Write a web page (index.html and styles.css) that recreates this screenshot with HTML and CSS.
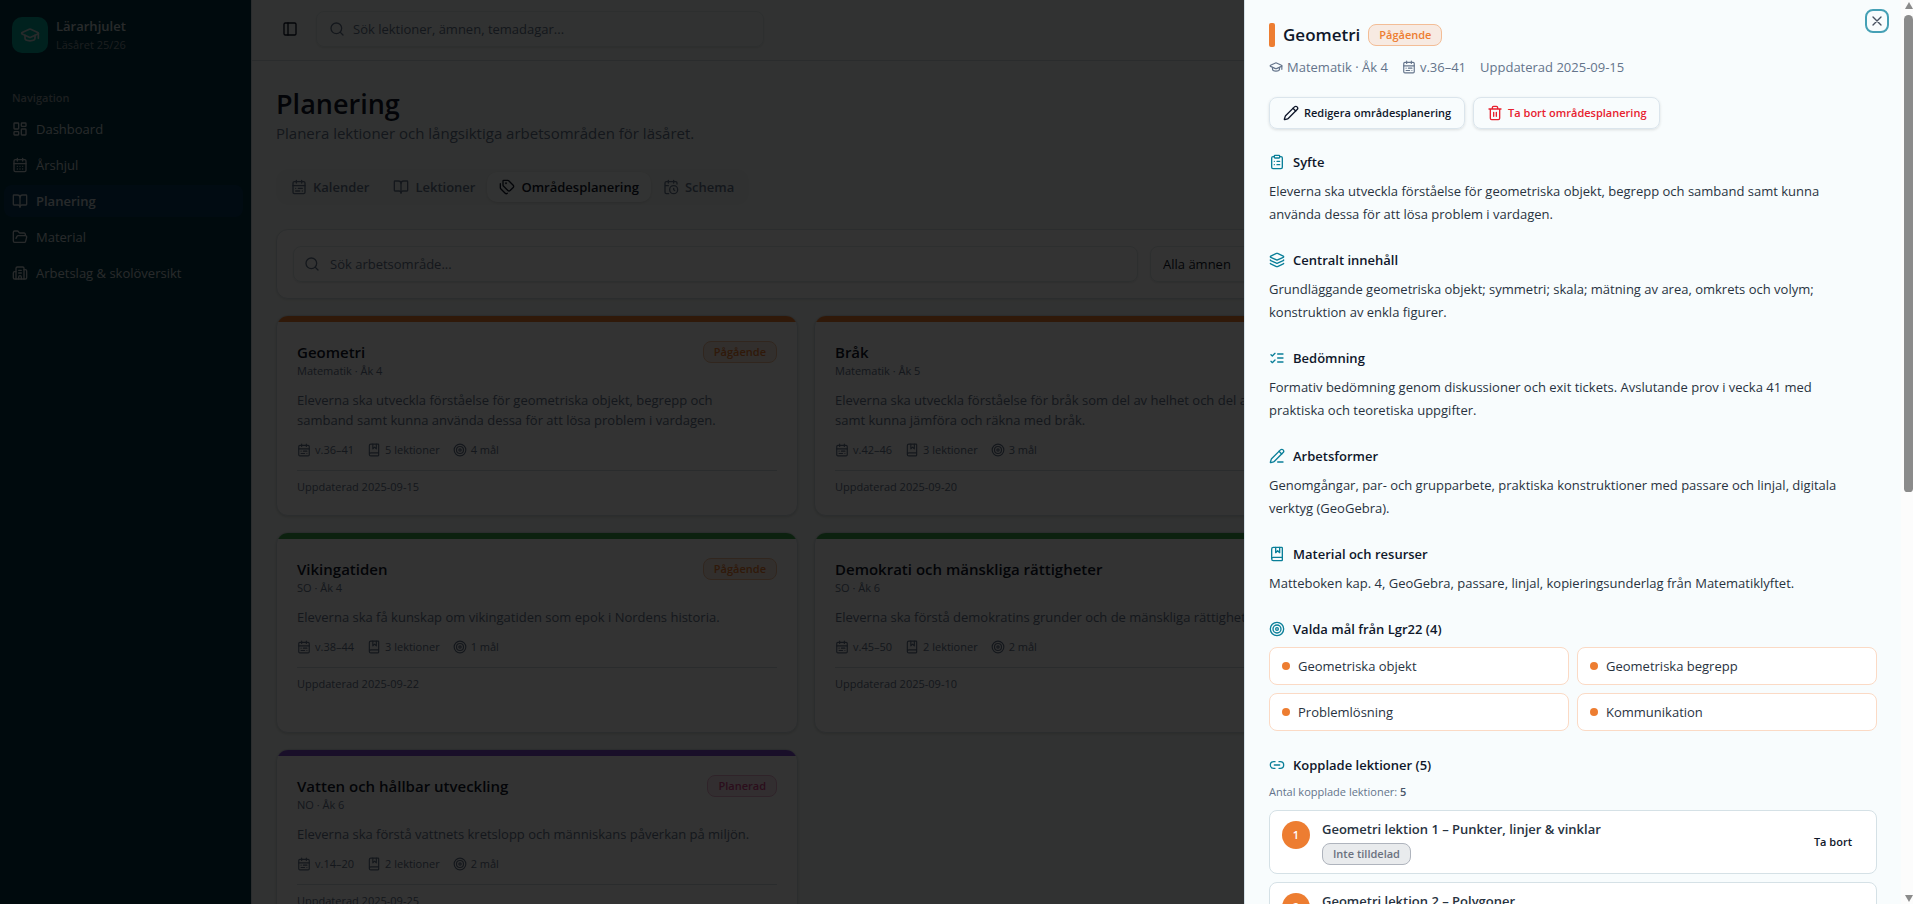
FILE: index.html
```
<!DOCTYPE html>
<html lang="sv">
<head>
  <meta charset="UTF-8">
  <meta name="viewport" content="width=device-width, initial-scale=1">
  <title>Lärarhjulet – Planering</title>
  <link rel="stylesheet" href="styles.css">
</head>
<body>

  <!-- Ikoner -->
  <svg class="sprite" aria-hidden="true">
    <symbol id="i-cap" viewBox="0 0 24 24"><path d="M21.42 10.922a1 1 0 0 0-.019-1.838L12.83 5.18a2 2 0 0 0-1.66 0L2.6 9.08a1 1 0 0 0 0 1.832l8.57 3.908a2 2 0 0 0 1.66 0z"/><path d="M22 10v6"/><path d="M6 12.5V16a6 3 0 0 0 12 0v-3.5"/></symbol>
    <symbol id="i-dashboard" viewBox="0 0 24 24"><rect width="7" height="9" x="3" y="3" rx="1"/><rect width="7" height="5" x="14" y="3" rx="1"/><rect width="7" height="9" x="14" y="12" rx="1"/><rect width="7" height="5" x="3" y="16" rx="1"/></symbol>
    <symbol id="i-days" viewBox="0 0 24 24"><path d="M8 2v4M16 2v4M3 10h18"/><rect width="18" height="18" x="3" y="4" rx="2"/><path d="M8 14h.01M12 14h.01M16 14h.01M8 18h.01M12 18h.01M16 18h.01"/></symbol>
    <symbol id="i-range" viewBox="0 0 24 24"><rect width="18" height="18" x="3" y="4" rx="2"/><path d="M16 2v4M3 10h18M8 2v4M17 14h-6M13 18H7M7 14h.01M17 18h.01"/></symbol>
    <symbol id="i-book" viewBox="0 0 24 24"><path d="M12 7v14"/><path d="M3 18a1 1 0 0 1-1-1V4a1 1 0 0 1 1-1h5a4 4 0 0 1 4 4 4 4 0 0 1 4-4h5a1 1 0 0 1 1 1v13a1 1 0 0 1-1 1h-6a3 3 0 0 0-3 3 3 3 0 0 0-3-3z"/></symbol>
    <symbol id="i-folder" viewBox="0 0 24 24"><path d="m6 14 1.5-2.9A2 2 0 0 1 9.24 10H20a2 2 0 0 1 1.94 2.5l-1.54 6a2 2 0 0 1-1.95 1.5H4a2 2 0 0 1-2-2V5a2 2 0 0 1 2-2h3.9a2 2 0 0 1 1.69.9l.81 1.2a2 2 0 0 0 1.67.9H18a2 2 0 0 1 2 2v2"/></symbol>
    <symbol id="i-building" viewBox="0 0 24 24"><path d="M10 12h4M10 8h4M14 21v-3a2 2 0 0 0-4 0v3"/><path d="M6 10H4a2 2 0 0 0-2 2v7a2 2 0 0 0 2 2h16a2 2 0 0 0 2-2V9a2 2 0 0 0-2-2h-2"/><path d="M6 21V5a2 2 0 0 1 2-2h8a2 2 0 0 1 2 2v16"/></symbol>
    <symbol id="i-panel" viewBox="0 0 24 24"><rect width="18" height="18" x="3" y="3" rx="2"/><path d="M9 3v18"/></symbol>
    <symbol id="i-search" viewBox="0 0 24 24"><circle cx="11" cy="11" r="8"/><path d="m21 21-4.34-4.34"/></symbol>
    <symbol id="i-tags" viewBox="0 0 24 24"><path d="M13.172 2a2 2 0 0 1 1.414.586l6.71 6.71a2.4 2.4 0 0 1 0 3.408l-4.592 4.592a2.4 2.4 0 0 1-3.408 0l-6.71-6.71A2 2 0 0 1 6 9.172V3a1 1 0 0 1 1-1z"/><path d="M2 7v6.172a2 2 0 0 0 .586 1.414l6.71 6.71a2.4 2.4 0 0 0 3.191.193"/><circle cx="10.5" cy="6.5" r=".5" fill="currentColor"/></symbol>
    <symbol id="i-clock" viewBox="0 0 24 24"><path d="M16 14v2.2l1.6 1M16 2v4M21 7.5V6a2 2 0 0 0-2-2H5a2 2 0 0 0-2 2v14a2 2 0 0 0 2 2h3.5M3 10h5M8 2v4"/><circle cx="16" cy="16" r="6"/></symbol>
    <symbol id="i-marked" viewBox="0 0 24 24"><path d="M10 2v8l3-3 3 3V2"/><path d="M4 19.5v-15A2.5 2.5 0 0 1 6.5 2H19a1 1 0 0 1 1 1v18a1 1 0 0 1-1 1H6.5a1 1 0 0 1 0-5H20"/></symbol>
    <symbol id="i-target" viewBox="0 0 24 24"><circle cx="12" cy="12" r="10"/><circle cx="12" cy="12" r="6"/><circle cx="12" cy="12" r="2"/></symbol>
    <symbol id="i-pencil" viewBox="0 0 24 24"><path d="M21.174 6.812a1 1 0 0 0-3.986-3.987L3.842 16.174a2 2 0 0 0-.5.83l-1.321 4.352a.5.5 0 0 0 .623.622l4.353-1.32a2 2 0 0 0 .83-.497z"/><path d="m15 5 4 4"/></symbol>
    <symbol id="i-pencil-line" viewBox="0 0 24 24"><path d="M13 21h8"/><path d="m15 5 4 4"/><path d="M21.174 6.812a1 1 0 0 0-3.986-3.987L3.842 16.174a2 2 0 0 0-.5.83l-1.321 4.352a.5.5 0 0 0 .623.622l4.353-1.32a2 2 0 0 0 .83-.497z"/></symbol>
    <symbol id="i-trash" viewBox="0 0 24 24"><path d="M10 11v6M14 11v6M19 6v14a2 2 0 0 1-2 2H7a2 2 0 0 1-2-2V6M3 6h18M8 6V4a2 2 0 0 1 2-2h4a2 2 0 0 1 2 2v2"/></symbol>
    <symbol id="i-clipboard" viewBox="0 0 24 24"><rect width="8" height="4" x="8" y="2" rx="1"/><path d="M16 4h2a2 2 0 0 1 2 2v14a2 2 0 0 1-2 2H6a2 2 0 0 1-2-2V6a2 2 0 0 1 2-2h2M12 11h4M12 16h4M8 11h.01M8 16h.01"/></symbol>
    <symbol id="i-layers" viewBox="0 0 24 24"><path d="M12.83 2.18a2 2 0 0 0-1.66 0L2.6 6.08a1 1 0 0 0 0 1.83l8.58 3.91a2 2 0 0 0 1.66 0l8.58-3.9a1 1 0 0 0 0-1.83z"/><path d="M2 12a1 1 0 0 0 .58.91l8.6 3.91a2 2 0 0 0 1.65 0l8.58-3.9A1 1 0 0 0 22 12"/><path d="M2 17a1 1 0 0 0 .58.91l8.6 3.91a2 2 0 0 0 1.65 0l8.58-3.9A1 1 0 0 0 22 17"/></symbol>
    <symbol id="i-checks" viewBox="0 0 24 24"><path d="m3 17 2 2 4-4M3 7l2 2 4-4M13 6h8M13 12h8M13 18h8"/></symbol>
    <symbol id="i-link" viewBox="0 0 24 24"><path d="M9 17H7A5 5 0 0 1 7 7h2M15 7h2a5 5 0 1 1 0 10h-2M8 12h8"/></symbol>
    <symbol id="i-x" viewBox="0 0 24 24"><path d="M18 6 6 18M6 6l12 12"/></symbol>
  </svg>

  <div class="app">
    <aside class="sidebar">
      <div class="brand">
        <div class="brand-logo"><svg class="icon"><use href="#i-cap"/></svg></div>
        <div>
          <div class="brand-name">Lärarhjulet</div>
          <div class="brand-year">Läsåret 25/26</div>
        </div>
      </div>
      <nav class="nav">
        <div class="nav-label">Navigation</div>
        <a class="nav-item" href="#"><svg class="icon"><use href="#i-dashboard"/></svg>Dashboard</a>
        <a class="nav-item" href="#"><svg class="icon"><use href="#i-days"/></svg>Årshjul</a>
        <a class="nav-item active" href="#"><svg class="icon"><use href="#i-book"/></svg>Planering</a>
        <a class="nav-item" href="#"><svg class="icon"><use href="#i-folder"/></svg>Material</a>
        <a class="nav-item" href="#"><svg class="icon"><use href="#i-building"/></svg>Arbetslag &amp; skolöversikt</a>
      </nav>
    </aside>

    <div class="page">
      <header class="topbar">
        <button class="toggle" aria-label="Visa sidofält"><svg class="icon"><use href="#i-panel"/></svg></button>
        <label class="search top-search">
          <svg class="icon"><use href="#i-search"/></svg>
          <input type="text" aria-label="Sök" placeholder="Sök lektioner, ämnen, temadagar...">
        </label>
      </header>

      <main class="main">
        <h1 class="title">Planering</h1>
        <p class="subtitle">Planera lektioner och långsiktiga arbetsområden för läsåret.</p>

        <div class="tabs">
          <button class="tab"><svg class="icon"><use href="#i-range"/></svg>Kalender</button>
          <button class="tab"><svg class="icon"><use href="#i-book"/></svg>Lektioner</button>
          <button class="tab active"><svg class="icon"><use href="#i-tags"/></svg>Områdesplanering</button>
          <button class="tab"><svg class="icon"><use href="#i-clock"/></svg>Schema</button>
        </div>

        <div class="filters">
          <label class="search area-search">
            <svg class="icon"><use href="#i-search"/></svg>
            <input type="text" aria-label="Sök arbetsområde" placeholder="Sök arbetsområde...">
          </label>
          <select class="select" aria-label="Ämne"><option>Alla ämnen</option></select>
        </div>

        <div class="grid">
          <article class="card orange">
            <div class="card-head"><h2>Geometri</h2><span class="badge ongoing">Pågående</span></div>
            <p class="card-sub">Matematik · Åk 4</p>
            <p class="card-desc">Eleverna ska utveckla förståelse för geometriska objekt, begrepp och samband samt kunna använda dessa för att lösa problem i vardagen.</p>
            <div class="card-meta">
              <span><svg class="icon"><use href="#i-range"/></svg>v.36–41</span>
              <span><svg class="icon"><use href="#i-marked"/></svg>5 lektioner</span>
              <span><svg class="icon"><use href="#i-target"/></svg>4 mål</span>
            </div>
            <div class="card-foot">Uppdaterad 2025-09-15</div>
          </article>

          <article class="card orange">
            <div class="card-head"><h2>Bråk</h2></div>
            <p class="card-sub">Matematik · Åk 5</p>
            <p class="card-desc">Eleverna ska utveckla förståelse för bråk som del av helhet och del av antal samt kunna jämföra och räkna med bråk.</p>
            <div class="card-meta">
              <span><svg class="icon"><use href="#i-range"/></svg>v.42–46</span>
              <span><svg class="icon"><use href="#i-marked"/></svg>3 lektioner</span>
              <span><svg class="icon"><use href="#i-target"/></svg>3 mål</span>
            </div>
            <div class="card-foot">Uppdaterad 2025-09-20</div>
          </article>

          <article class="card green row-start">
            <div class="card-head"><h2>Vikingatiden</h2><span class="badge ongoing">Pågående</span></div>
            <p class="card-sub">SO · Åk 4</p>
            <p class="card-desc">Eleverna ska få kunskap om vikingatiden som epok i Nordens historia.</p>
            <div class="card-meta">
              <span><svg class="icon"><use href="#i-range"/></svg>v.38–44</span>
              <span><svg class="icon"><use href="#i-marked"/></svg>3 lektioner</span>
              <span><svg class="icon"><use href="#i-target"/></svg>1 mål</span>
            </div>
            <div class="card-foot">Uppdaterad 2025-09-22</div>
          </article>

          <article class="card green">
            <div class="card-head"><h2>Demokrati och mänskliga rättigheter</h2></div>
            <p class="card-sub">SO · Åk 6</p>
            <p class="card-desc">Eleverna ska förstå demokratins grunder och de mänskliga rättigheterna.</p>
            <div class="card-meta">
              <span><svg class="icon"><use href="#i-range"/></svg>v.45–50</span>
              <span><svg class="icon"><use href="#i-marked"/></svg>2 lektioner</span>
              <span><svg class="icon"><use href="#i-target"/></svg>2 mål</span>
            </div>
            <div class="card-foot">Uppdaterad 2025-09-10</div>
          </article>

          <article class="card purple row-start">
            <div class="card-head"><h2>Vatten och hållbar utveckling</h2><span class="badge planned">Planerad</span></div>
            <p class="card-sub">NO · Åk 6</p>
            <p class="card-desc">Eleverna ska förstå vattnets kretslopp och människans påverkan på miljön.</p>
            <div class="card-meta">
              <span><svg class="icon"><use href="#i-range"/></svg>v.14–20</span>
              <span><svg class="icon"><use href="#i-marked"/></svg>2 lektioner</span>
              <span><svg class="icon"><use href="#i-target"/></svg>2 mål</span>
            </div>
            <div class="card-foot">Uppdaterad 2025-09-25</div>
          </article>
        </div>
      </main>
    </div>
  </div>

  <div class="overlay"></div>

  <!-- Detaljpanel -->
  <div class="sheet" role="dialog" aria-labelledby="sheetTitle">
    <div class="sheet-body">
      <div class="sheet-head">
        <span class="sheet-mark"></span>
        <h2 id="sheetTitle">Geometri</h2>
        <span class="badge ongoing">Pågående</span>
      </div>
      <div class="sheet-meta">
        <span><svg class="icon"><use href="#i-cap"/></svg>Matematik · Åk 4</span>
        <span><svg class="icon"><use href="#i-range"/></svg>v.36–41</span>
        <span>Uppdaterad 2025-09-15</span>
      </div>
      <div class="actions">
        <button class="btn"><svg class="icon"><use href="#i-pencil"/></svg>Redigera områdesplanering</button>
        <button class="btn danger"><svg class="icon"><use href="#i-trash"/></svg>Ta bort områdesplanering</button>
      </div>

      <div class="sections">
        <section>
          <h3><svg class="icon"><use href="#i-clipboard"/></svg>Syfte</h3>
          <p>Eleverna ska utveckla förståelse för geometriska objekt, begrepp och samband samt kunna använda dessa för att lösa problem i vardagen.</p>
        </section>
        <section>
          <h3><svg class="icon"><use href="#i-layers"/></svg>Centralt innehåll</h3>
          <p>Grundläggande geometriska objekt; symmetri; skala; mätning av area, omkrets och volym; konstruktion av enkla figurer.</p>
        </section>
        <section>
          <h3><svg class="icon"><use href="#i-checks"/></svg>Bedömning</h3>
          <p>Formativ bedömning genom diskussioner och exit tickets. Avslutande prov i vecka 41 med praktiska och teoretiska uppgifter.</p>
        </section>
        <section>
          <h3><svg class="icon"><use href="#i-pencil-line"/></svg>Arbetsformer</h3>
          <p>Genomgångar, par- och grupparbete, praktiska konstruktioner med passare och linjal, digitala verktyg (GeoGebra).</p>
        </section>
        <section>
          <h3><svg class="icon"><use href="#i-marked"/></svg>Material och resurser</h3>
          <p>Matteboken kap. 4, GeoGebra, passare, linjal, kopieringsunderlag från Matematiklyftet.</p>
        </section>
        <section>
          <h3><svg class="icon"><use href="#i-target"/></svg>Valda mål från Lgr22 (4)</h3>
          <ul class="goals">
            <li>Geometriska objekt</li>
            <li>Geometriska begrepp</li>
            <li>Problemlösning</li>
            <li>Kommunikation</li>
          </ul>
        </section>
        <section>
          <h3><svg class="icon"><use href="#i-link"/></svg>Kopplade lektioner (5)</h3>
          <div class="count">Antal kopplade lektioner: <b>5</b></div>
          <div class="lesson">
            <span class="num">1</span>
            <div class="lesson-info">
              <div class="lesson-title">Geometri lektion 1 – Punkter, linjer &amp; vinklar</div>
              <span class="badge unassigned">Inte tilldelad</span>
            </div>
            <button class="remove">Ta bort</button>
          </div>
          <div class="lesson">
            <span class="num">2</span>
            <div class="lesson-info">
              <div class="lesson-title">Geometri lektion 2 – Polygoner</div>
              <span class="badge unassigned">Inte tilldelad</span>
            </div>
            <button class="remove">Ta bort</button>
          </div>
        </section>
      </div>
    </div>

    <div class="scrollbar">
      <span class="arrow up"></span>
      <span class="thumb"></span>
      <span class="arrow down"></span>
    </div>

    <button class="close" aria-label="Stäng"><svg class="icon"><use href="#i-x"/></svg></button>
  </div>

</body>
</html>
```
FILE: styles.css
```
* {
  margin: 0;
  padding: 0;
  box-sizing: border-box;
}

body {
  font-family: "Segoe UI", "Open Sans", "Noto Sans", sans-serif;
  font-size: 13px;
  line-height: 20px;
  color: #0f172a;
  background: #f6fbf9;
  height: 100vh;
  overflow: hidden;
}

button, input, select {
  font: inherit;
  color: inherit;
  background: none;
  border: none;
}

button {
  cursor: pointer;
}

a {
  color: inherit;
  text-decoration: none;
}

.sprite {
  display: none;
}

.icon {
  width: 16px;
  height: 16px;
  flex-shrink: 0;
  fill: none;
  stroke: currentColor;
  stroke-width: 2;
  stroke-linecap: round;
  stroke-linejoin: round;
}

.app {
  display: flex;
  height: 100vh;
  padding-right: 15px;
  overflow: hidden;
}

/* Sidofält */
.sidebar {
  width: 252px;
  flex-shrink: 0;
  background: #003341;
  border-right: 1px solid #d0dce0;
  color: #c8d2d6;
}

.brand {
  display: flex;
  align-items: center;
  gap: 8px;
  padding: 16px 12px;
}

.brand-logo {
  display: flex;
  align-items: center;
  justify-content: center;
  width: 36px;
  height: 36px;
  border-radius: 10px;
  background: #00a697;
}

.brand-logo .icon {
  width: 20px;
  height: 20px;
}

.brand-name {
  font-weight: 600;
  line-height: 20px;
}

.brand-year {
  font-size: 11px;
  line-height: 17px;
  color: #8a979c;
}

.nav {
  display: flex;
  flex-direction: column;
  gap: 4px;
  padding: 13px 8px 0 4px;
}

.nav-label {
  padding: 8px;
  font-size: 11px;
  font-weight: 600;
  line-height: 16px;
  color: #8a979c;
  margin-bottom: -5px;
}

.nav-item {
  display: flex;
  align-items: center;
  gap: 8px;
  height: 32px;
  padding: 0 8px;
  border-radius: 8px;
}

.nav-item.active {
  background: #063a5b;
  font-weight: 600;
}

/* Topp */
.page {
  flex: 1;
  min-width: 0;
}

.topbar {
  display: flex;
  align-items: center;
  gap: 18px;
  height: 61px;
  padding: 0 30px 2px;
  border-bottom: 1px solid #d0dce0;
}

.toggle {
  display: flex;
}

.search {
  display: flex;
  align-items: center;
  gap: 8px;
  height: 36px;
  padding: 0 12px;
  border: 1px solid #e0e8eb;
  border-radius: 8px;
  color: #64748b;
  box-shadow: 0 1px 2px rgba(0, 0, 0, 0.1);
}

.search input {
  flex: 1;
  min-width: 0;
  outline: none;
}

.search input::placeholder {
  color: #64748b;
}

.top-search {
  width: 448px;
}

/* Innehåll */
.main {
  padding: 24px 24px 0;
}

.title {
  font-size: 27px;
  font-weight: 600;
  line-height: 37px;
}

.subtitle {
  font-size: 15px;
  line-height: 22px;
  color: #64748b;
}

.tabs {
  display: inline-flex;
  height: 36px;
  margin: 25px 0 24px;
  padding: 3px;
  border-radius: 12px;
  background: #f0f5f4;
}

.tab {
  display: flex;
  align-items: center;
  gap: 6px;
  padding: 0 12px;
  border-radius: 10px;
  font-weight: 600;
  color: #64748b;
}

.tab.active {
  color: #0f172a;
  background: #fafefd;
  box-shadow: 0 1px 3px rgba(0, 0, 0, 0.12);
}

.filters {
  display: flex;
  gap: 12px;
  margin-bottom: 16px;
  padding: 16px;
  border: 1px solid #d8e2e6;
  border-radius: 12px;
  background: #fff;
  box-shadow: 0 1px 3px rgba(0, 0, 0, 0.1);
}

.area-search {
  flex: 1;
  gap: 10px;
  padding: 0 10px;
}

.select {
  width: 707px;
  height: 36px;
  padding: 0 12px;
  appearance: none;
  border: 1px solid #e0e8eb;
  border-radius: 8px;
  box-shadow: 0 1px 2px rgba(0, 0, 0, 0.1);
}

.grid {
  display: grid;
  grid-template-columns: repeat(3, 1fr);
  grid-auto-rows: 1fr;
  gap: 16px;
}

.row-start {
  grid-column: 1;
}

.card {
  padding: 0 20px 20px;
  border: 1px solid #d8e2e6;
  border-radius: 12px;
  background: #fff;
  box-shadow: 0 1px 3px rgba(0, 0, 0, 0.15);
  overflow: hidden;
}

.card::before {
  content: "";
  display: block;
  height: 6px;
  margin: 0 -20px 19px;
  background: var(--accent);
}

.orange { --accent: #ed7d31; }
.green { --accent: #3fa34d; }
.purple { --accent: #7c4dce; }

.card-head {
  display: flex;
  align-items: center;
  justify-content: space-between;
  height: 22px;
}

.card-head h2 {
  font-size: 15px;
  font-weight: 600;
}

.card-sub {
  font-size: 11px;
  line-height: 15px;
  color: #64748b;
}

.card-desc {
  margin: 12px 0;
  padding-right: 16px;
  color: #64748b;
}

.card-meta {
  display: flex;
  gap: 13px;
  padding-bottom: 12px;
  border-bottom: 1px solid #d0dce0;
  font-size: 11px;
  line-height: 16px;
  color: #64748b;
}

.card-meta span {
  display: flex;
  align-items: center;
  gap: 4px;
}

.card-meta .icon {
  width: 14px;
  height: 14px;
}

.card-foot {
  padding-top: 8px;
  font-size: 11px;
  line-height: 16px;
  color: #64748b;
}

.badge {
  display: inline-flex;
  align-items: center;
  height: 22px;
  padding: 0 10px;
  border: 1px solid;
  border-radius: 8px;
  font-size: 11px;
  font-weight: 600;
  line-height: 16px;
}

.badge.ongoing {
  color: #ed7d31;
  background: #f7eae2;
  border-color: #f3bd96;
}

.badge.planned {
  color: #d6478c;
  background: #f9e6ef;
  border-color: #eab0cd;
}

.badge.unassigned {
  color: #6b7280;
  background: #e9ebed;
  border-color: #afb4bd;
}

.overlay {
  position: fixed;
  inset: 0;
  background: rgba(0, 0, 0, 0.8);
}

/* Panel */
.sheet {
  position: fixed;
  top: 0;
  right: 0;
  bottom: 0;
  display: flex;
  width: 669px;
  border-left: 1px solid #d5e1e8;
  background: #f8fcfd;
}

.sheet-body {
  flex: 1;
  min-width: 0;
  padding: 23px 24px 0;
  overflow: hidden;
}

.sheet-head {
  display: flex;
  align-items: center;
  gap: 8px;
}

.sheet-mark {
  width: 6px;
  height: 24px;
  border-radius: 2px;
  background: #ed7d31;
}

.sheet-head h2 {
  font-size: 17px;
  font-weight: 600;
  line-height: 24px;
}

.sheet-meta {
  display: flex;
  gap: 14px;
  margin: 10px 0 20px;
  color: #64748b;
}

.sheet-meta span {
  display: flex;
  align-items: center;
  gap: 4px;
}

.sheet-meta .icon {
  width: 14px;
  height: 14px;
}

.actions {
  display: flex;
  gap: 8px;
  margin-bottom: 23px;
}

.btn {
  display: flex;
  align-items: center;
  gap: 5px;
  height: 32px;
  padding: 0 13px;
  border: 1px solid #dbe5ec;
  border-radius: 8px;
  font-size: 11px;
  font-weight: 600;
  box-shadow: 0 1px 3px rgba(0, 0, 0, 0.12);
}

.btn.danger {
  color: #e7212f;
}

.sections {
  display: flex;
  flex-direction: column;
  gap: 24px;
}

.sections h3 {
  display: flex;
  align-items: center;
  gap: 8px;
  margin-bottom: 8px;
  font-size: 13px;
  font-weight: 600;
}

.sections h3 .icon {
  color: #0a7f99;
}

.sections p {
  padding-right: 16px;
  line-height: 23px;
  color: #28333f;
}

.goals {
  display: grid;
  grid-template-columns: 1fr 1fr;
  gap: 8px;
  list-style: none;
}

.goals li {
  display: flex;
  align-items: center;
  gap: 8px;
  height: 38px;
  padding: 0 12px;
  border: 1px solid #fbdac5;
  border-radius: 8px;
  background: #fff;
  color: #28333f;
}

.goals li::before {
  content: "";
  width: 8px;
  height: 8px;
  border-radius: 50%;
  background: #ed7d31;
}

.count {
  margin-bottom: 10px;
  font-size: 11px;
  line-height: 17px;
  color: #64748b;
}

.count b {
  font-weight: 600;
  color: #475569;
}

.lesson {
  display: flex;
  align-items: center;
  gap: 12px;
  height: 64px;
  margin-bottom: 8px;
  padding: 0 12px;
  border: 1px solid #d5e1e6;
  border-radius: 8px;
  background: #fff;
}

.num {
  display: flex;
  align-items: center;
  justify-content: center;
  align-self: flex-start;
  width: 28px;
  height: 28px;
  margin-top: 10px;
  border-radius: 50%;
  background: #ed7d31;
  color: #fff;
  font-size: 11px;
  font-weight: 600;
}

.lesson-info {
  flex: 1;
  display: flex;
  flex-direction: column;
  align-items: flex-start;
  gap: 4px;
}

.lesson-title {
  font-weight: 600;
  color: #28333f;
}

.remove {
  padding: 0 12px;
  font-size: 11px;
  font-weight: 600;
}

.scrollbar {
  display: flex;
  flex-direction: column;
  align-items: flex-end;
  width: 12px;
  padding: 2px 0;
  background: #fcfcfc;
}

.thumb {
  width: 9px;
  height: 53%;
  margin: 6px 0 auto;
  border-radius: 5px 5px 4px 4px;
  background: #8b8b8b;
}

.arrow {
  border: 4px solid transparent;
}

.arrow.up {
  border-top: none;
  border-bottom: 7px solid #8b8b8b;
}

.arrow.down {
  border-bottom: none;
  border-top: 7px solid #8b8b8b;
}

.close {
  position: absolute;
  top: 9px;
  right: 24px;
  display: flex;
  align-items: center;
  justify-content: center;
  width: 24px;
  height: 24px;
  border: 2px solid #45a0b5;
  border-radius: 8px;
  color: #475160;
}
```
